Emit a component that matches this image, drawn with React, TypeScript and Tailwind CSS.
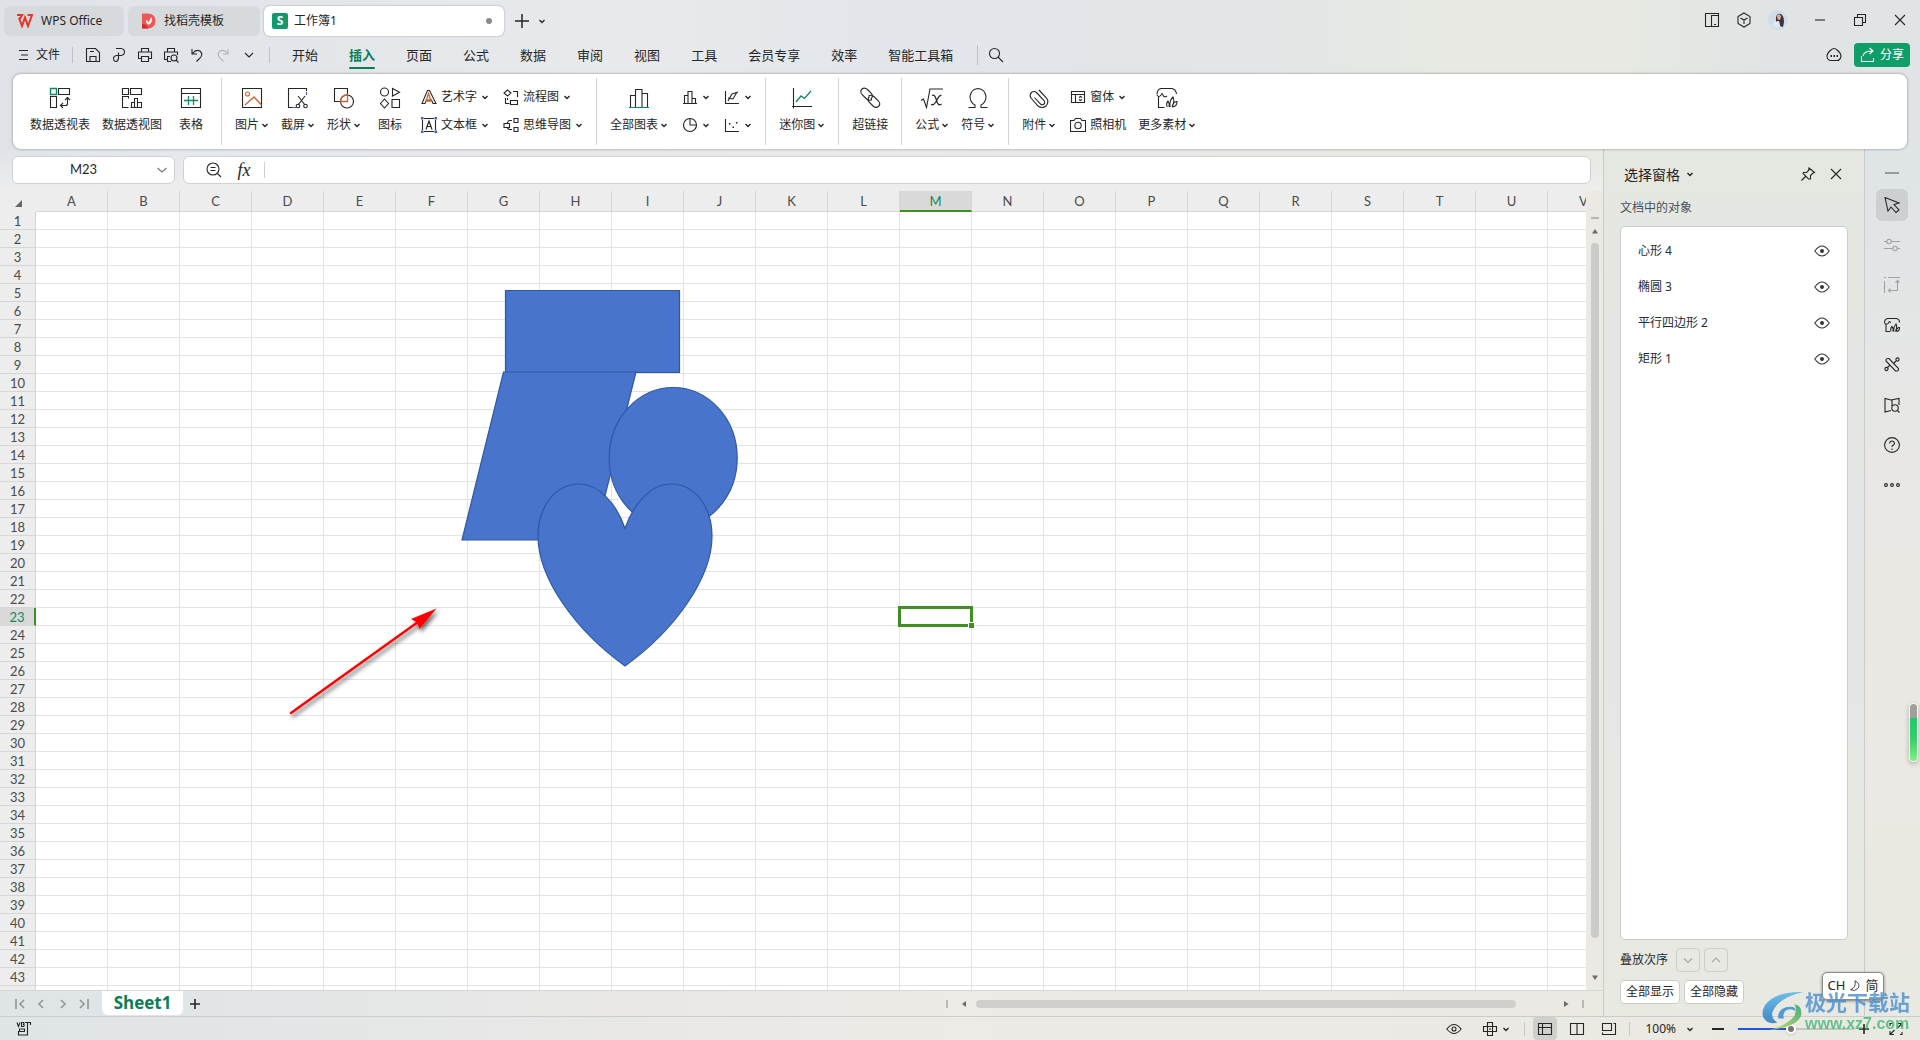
import type { ReactNode } from 'react'
import clsx from 'clsx'

const COLUMNS = 'ABCDEFGHIJKLMNOPQRSTUV'.split('')
const ROW_COUNT = 44
const ROWS = Array.from({ length: ROW_COUNT }, (_, i) => i + 1)
const ACTIVE_COL = 'M'
const ACTIVE_ROW = 23

const MENU_TABS = ['开始', '插入', '页面', '公式', '数据', '审阅', '视图', '工具', '会员专享', '效率', '智能工具箱']
const OBJECTS = ['心形 4', '椭圆 3', '平行四边形 2', '矩形 1']

const GREEN = '#0f8a60'
const ORANGE = '#d0622b'
const BLUE = '#2f5fd8'

interface IconProps {
  size?: number
  box?: number
  className?: string
  children: ReactNode
}

function Icon({ size = 16, box, className, children }: IconProps) {
  const b = box ?? size
  return (
    <svg
      width={size}
      height={size}
      viewBox={`0 0 ${b} ${b}`}
      fill="none"
      stroke="currentColor"
      strokeWidth="1.1"
      className={clsx('flex-none', className)}
      aria-hidden="true"
    >
      {children}
    </svg>
  )
}

function Caret({ className }: { className?: string }) {
  return (
    <Icon size={8} className={className}>
      <path d="M1.5 3 4 5.5 6.5 3" strokeWidth="1.4" />
    </Icon>
  )
}

function Chevron({ d = 'M4 6.5 8 10.5 12 6.5' }: { d?: string }) {
  return (
    <Icon>
      <path d={d} strokeWidth="1.2" />
    </Icon>
  )
}

/* ---------- ribbon icons, 22px ---------- */

const big = {
  pivotTable: (
    <Icon size={22}>
      <path d="M1.5 1.5h6v6h-6z" stroke={GREEN} strokeWidth="1.4" />
      <path d="M9.5 1.5h11v6h-11zM1.5 9.5h6v11h-6z" />
      <path d="M18.5 11v5.5q0 2-2 2H12M16 13l2.5-2.500L21 13M14 16l-2.500 2.500L14 21" />
    </Icon>
  ),
  pivotChart: (
    <Icon size={22}>
      <path d="M1.5 1.5h6v6h-6zM9.5 1.5h11v6h-11zM7.5 20.5h-6v-11h6v2" />
      <path d="M10.5 20.5v-5h3v5M13.5 20.5v-9h3v9M16.5 15.5h4v5h-11" />
    </Icon>
  ),
  table: (
    <Icon size={22}>
      <path d="M1.5 1.5h19v19h-19zM1.5 6.5h19" />
      <path d="M4 13.5h14M8.5 9v9M13.5 9v9" stroke={GREEN} strokeWidth="1.3" />
    </Icon>
  ),
  picture: (
    <Icon size={22}>
      <path d="M1.5 1.5h19v19h-19z" />
      <circle cx="6.5" cy="7" r="2" stroke={ORANGE} />
      <path d="m4 18 9-8 7.500 8" stroke={ORANGE} strokeWidth="1.3" />
    </Icon>
  ),
  screenshot: (
    <Icon size={22}>
      <path d="M5 20.5H1.5v-19h18V4" />
      <path d="M5 20.500h4M19.500 5v3" stroke={BLUE} />
      <path d="m11 9 7 9M18 9l-7 9" />
      <circle cx="11" cy="19" r="1.8" />
      <circle cx="18.5" cy="19" r="1.8" />
    </Icon>
  ),
  shapes: (
    <Icon size={22}>
      <path d="M7 14.5H1.5v-13h13V7" />
      <circle cx="14" cy="14.5" r="6.5" />
      <path d="M7.5 14.5q0-6 7-7v7z" stroke={ORANGE} strokeWidth="1.3" />
    </Icon>
  ),
  icons: (
    <Icon size={22}>
      <circle cx="5.5" cy="5" r="4" />
      <path d="M13.5 1.5V9l7-3.750zM5.500 12l4 4.500-4 4.500-4-4.500zM13 12.500h7.500v8H13z" />
    </Icon>
  ),
  charts: (
    <Icon size={22}>
      <path d="M2.5 20V8.5h5V20M7.500 20V2.500H14V20M14 6.500h5.500V20" />
      <path d="M1 20.5h20" stroke={GREEN} />
    </Icon>
  ),
  sparkline: (
    <Icon size={22}>
      <path d="M2.5 1v20.500M1 19.500h20" />
      <path d="m5 15 5-6 3.500 2.500L20 4" stroke={GREEN} strokeWidth="1.3" />
    </Icon>
  ),
  link: (
    <Icon size={22}>
      <path d="M13 12.500q-3 2-6-1L3 7.500q-2.500-3 0-5.500 2.500-2 5.500.500l4 4q2 3-.500 5.500" />
      <path d="M9.500 9q3-2 6 1l4 4q2.500 3 0 5.500-2.500 2-5.500-.500l-4-4q-2-3 .500-5.500" />
    </Icon>
  ),
  formula: (
    <Icon size={22}>
      <path d="M0 13.500 2.500 12l3 8.500L9 2h13" />
      <path
        d="M11 8.500q2-1.500 3.500 2l2 5.500q1.500 3 4 1M20.500 8.500q-2-.500-4 3.500l-2 3.500q-2 3-4.500 2"
        strokeWidth="1.3"
      />
    </Icon>
  ),
  omega: (
    <Icon size={22}>
      <path d="M1.500 20.500H8V18q-5-2.500-5-8.500 1-7.500 8-8 7 .500 8 8 0 6-5 8.500v2.500h6.500" />
    </Icon>
  ),
  clip: (
    <Icon size={22}>
      <path d="m6.500 10.500 6 6.500q2 1.500 3.500 0t0-3.500L8.500 5.500Q6 3.500 3.500 5.500 1 8 3 11l7 8q4 3 8 0 3.500-4 .500-8L11 3" />
    </Icon>
  ),
  material: (
    <Icon size={22}>
      <path d="M2.500 9v11.500h6M1 7.500q0-5 4-6h11q4 1 4.500 5.500M1 8q2 3 4 0 1-3 2 0t4 1" />
      <path d="M11 20q-1-4 1-6 2 3 1 6M14 20q-1-6 3-10 2 5-1 10M16.500 20q0-5 4.500-5.500 0 5-4.500 5.500" />
    </Icon>
  ),
}

/* ---------- ribbon icons, 16px ---------- */

const small = {
  wordArt: (
    <Icon>
      <path d="M1 14.500 6.500 1.500h2L15 14.500h-3L10.500 11h-5L4 14.500z" />
      <path d="M7.500 4.500 10 12H5z" stroke={ORANGE} strokeWidth="1.3" />
    </Icon>
  ),
  textBox: (
    <Icon>
      <path d="M3 1.500h10M3 14.500h10M1.500 3v10M14.500 3v10" />
      <path d="M5 12.500 8 4l3 8.500M6 9.500h4" strokeWidth="1.2" />
      <path
        d="M0 0h2.500v2.500H0zM13.500 0H16v2.500h-2.500zM0 13.500h2.500V16H0zM13.500 13.500H16V16h-2.500z"
        fill={BLUE}
        stroke="none"
      />
    </Icon>
  ),
  flow: (
    <Icon>
      <path d="m4.500 1 3.500 3-3.500 3L1 4zM10 2.500h4.500V8M2.500 9v5.500h4M7.500 11.500h7v4h-7zM4.500 9v2" />
    </Icon>
  ),
  mind: (
    <Icon>
      <path d="M1 6.500h5.500v4H1zM11 1.500h4v4h-4zM11 10.500h4v4h-4zM9 3.500H6L4 6M9 12.500H6l-2-2" />
    </Icon>
  ),
  bars: (
    <Icon>
      <path d="M1 14.500h14M2.500 14V6.500H6V14M6 14V2.500h4V14M10 9.500h3.500V14" />
    </Icon>
  ),
  lines: (
    <Icon>
      <path d="M1.500 2v12.500H15M4 12l4-7 6-2M4 9l5 1 4-7" />
    </Icon>
  ),
  pie: (
    <Icon>
      <circle cx="8" cy="8" r="6.500" />
      <path d="M8 1.500V8h6.500" />
    </Icon>
  ),
  scatter: (
    <Icon>
      <path d="M1.500 2v12.500H15" />
      <path d="M5 6h1.500v1.500H5zM8.500 9.500H10V11H8.500zM12 5h1.500v1.500H12z" fill="currentColor" stroke="none" />
    </Icon>
  ),
  form: (
    <Icon>
      <path d="M1.500 2.500h13v11h-13zM1.500 5.500h13M5.500 5.500v8" />
      <path d="m9 8.500 1.500-1 1.500 1M9 10.500l1.500 1 1.500-1" />
    </Icon>
  ),
  camera: (
    <Icon>
      <path d="M.500 3.500H4l1.500-2h5l1.500 2h3.500v11H.500z" />
      <circle cx="8" cy="8.500" r="3.200" />
    </Icon>
  ),
}

function BigButton({ icon, label, caret }: { icon: ReactNode; label: string; caret?: boolean }) {
  return (
    <button type="button" className="flex min-w-[34px] flex-col items-center gap-2">
      {icon}
      <span className="flex items-center gap-0.5 leading-4">
        {label}
        {caret && <Caret />}
      </span>
    </button>
  )
}

interface SmallButtonProps {
  icon: ReactNode
  label?: string
  name?: string
  caret?: boolean
}

function SmallButton({ icon, label, name, caret }: SmallButtonProps) {
  return (
    <button type="button" aria-label={name} className="flex h-5 items-center gap-1">
      {icon}
      {label}
      {caret && <Caret />}
    </button>
  )
}

function Stack({ children }: { children: ReactNode }) {
  return <div className="ml-0.5 flex flex-col items-start gap-2">{children}</div>
}

function Group({ children, first, last }: { children: ReactNode; first?: boolean; last?: boolean }) {
  return (
    <div
      className={clsx(
        'my-1 flex items-start gap-3 pt-[9px] pr-[13px]',
        first ? 'pl-[17px]' : 'pl-[13px]',
        !last && 'border-r border-[#d4d4d4]',
      )}
    >
      {children}
    </div>
  )
}

function TitleBar() {
  return (
    <header className="flex h-9 items-end gap-1 pl-1 text-[12px]">
      <button type="button" className="flex h-[30px] w-[120px] items-center gap-2 rounded-md bg-[#d7dadd] pl-3">
        <svg width="17" height="14" viewBox="0 0 17 14" fill="none" aria-hidden="true">
          <path d="M1 1h5l-1.500 3H3M3 4l3 8 3-8.500L12 12l4-11h-4.500" stroke="#ee3524" strokeWidth="2" />
        </svg>
        WPS Office
      </button>
      <button type="button" className="flex h-[30px] w-[132px] items-center gap-2 rounded-md bg-[#d7dadd] pl-3.5">
        <svg width="14" height="16" viewBox="0 0 15 16" aria-hidden="true">
          <path d="M0 0h7q7.500 1 7.500 8T7 16H0z" fill="#ef5656" />
          <path d="M0 11q4 0 7 5H0z" fill="#c93030" />
          <path d="M7.500 12q-4-1-3-5 3 1 3 4 0-5 3-7 1.500 5-3 8" fill="#fff" />
        </svg>
        找稻壳模板
      </button>
      <div className="flex h-[30px] w-[240px] items-center gap-1.5 rounded-md bg-white pr-3 pl-2 shadow-[0_0_2px_rgba(0,0,0,.35)]">
        <span className="flex h-4 w-4 items-center justify-center rounded-[2px] bg-[#12996a] text-[12px] font-bold text-white">
          S
        </span>
        <span className="flex-1">工作簿1</span>
        <span className="h-1.5 w-1.5 rounded-full bg-[#8b8b8b]" />
      </div>
      <div className="flex h-[30px] items-center pl-1.5">
        <button type="button" aria-label="新建标签">
          <Icon>
            <path d="M8 1v14M1 8h14" strokeWidth="1.500" />
          </Icon>
        </button>
        <button type="button" aria-label="标签列表" className="px-2">
          <Caret />
        </button>
      </div>
      <div className="ml-auto flex h-8 items-center">
        <button type="button" aria-label="侧栏" className="flex w-8 justify-center">
          <Icon>
            <path d="M1.500 1.500h13v13h-13zM7.500 14.500v-11h7M10 12.500h2" />
          </Icon>
        </button>
        <button type="button" aria-label="应用" className="flex w-8 justify-center">
          <Icon>
            <path d="m8 1 6 3.500v7L8 15l-6-3.500v-7zM4.500 6 8 8l3.500-2M8 8v4" />
          </Icon>
        </button>
        <button type="button" aria-label="账号" className="flex w-9 justify-center">
          <svg width="20" height="20" viewBox="0 0 20 20" aria-hidden="true">
            <circle cx="10" cy="10" r="10" fill="#cfdde8" />
            <path d="M8 7q1-4 5-3 3 2 3 8l-1 5-3-1-1-5-3 1z" fill="#3a3338" />
            <path d="M9 5q3-2 4 1 0 4-2 4-3-1-2-5" fill="#dba49b" />
            <path d="m6 12 5-1 1 6q-5 1-8-2z" fill="#dce9f5" />
          </svg>
        </button>
        <button type="button" aria-label="最小化" className="ml-1 flex w-10 justify-center">
          <Icon>
            <path d="M3 8h10" />
          </Icon>
        </button>
        <button type="button" aria-label="还原" className="flex w-10 justify-center">
          <Icon>
            <path d="M2.500 5.500h8v8h-8zM5.500 5V2.500h8v8h-3" />
          </Icon>
        </button>
        <button type="button" aria-label="关闭" className="flex w-10 justify-center">
          <Icon>
            <path d="m3 3 10 10M13 3 3 13" />
          </Icon>
        </button>
      </div>
    </header>
  )
}

const QUICK: { name: string; icon: ReactNode; dim?: boolean }[] = [
  { name: '保存', icon: <path d="M1.500 14.500v-13h9l4 4v9zM5 14v-4.500h6V14M5 4.500h4" /> },
  { name: '输出为PDF', icon: <path d="M5 1.500h5q3.500.500 3.500 3.500T10 8.500H5.500q-3 .500-3 3t2 3 3-3v-6" /> },
  { name: '打印', icon: <path d="M4.500 5V1.500h7V5M4 11.500H1.500V5h13v6.500H12M4.500 9.500h7v5h-7z" /> },
  {
    name: '打印预览',
    icon: (
      <>
        <path d="M4.500 5V1.500h7V5M4 12.500H1.500V5h13v3M8 14.500H4.500v-5H7" />
        <circle cx="11" cy="11" r="3" />
        <path d="m13 13 2.500 2.500" />
      </>
    ),
  },
  { name: '撤销', icon: <path d="M3 2v5h5M3.500 6.500Q7 2 11 4q4 4-1 8l-2.500 2.500" /> },
  { name: '恢复', dim: true, icon: <path d="M13 2v5H8M12.500 6.500Q9 2 5 4q-4 4 1 8l2.500 2.500" /> },
  { name: '更多', icon: <path d="m4 6 4 4 4-4" /> },
]

function MenuBar() {
  return (
    <nav className="flex h-[38px] items-center">
      <button type="button" className="ml-4 flex items-center gap-1 text-[12px]">
        <Icon>
          <path d="M3 3.500h9M5 8h7M3 12.500h9" />
        </Icon>
        文件
      </button>
      <span className="mr-[7px] ml-3 h-4 w-px bg-[#bfc2c5]" />
      {QUICK.map((q) => (
        <button
          key={q.name}
          type="button"
          aria-label={q.name}
          className={clsx('flex w-[26px] justify-center', q.dim && 'text-[#b3b5b8]')}
        >
          <Icon>{q.icon}</Icon>
        </button>
      ))}
      <span className="mr-1.5 ml-[7px] h-4 w-px bg-[#bfc2c5]" />
      <div className="flex gap-[31px] px-4">
        {MENU_TABS.map((t) => (
          <button
            key={t}
            type="button"
            className={clsx(
              'flex h-[38px] flex-col items-center text-[13px]',
              t === '插入' && 'font-bold text-[#0a7d55]',
            )}
          >
            <span className="mt-2 leading-[22px]">{t}</span>
            {t === '插入' && <span className="mt-px h-0.5 w-[26px] rounded-full bg-[#0a7d55]" />}
          </button>
        ))}
      </div>
      <span className="mx-2 h-5 w-px bg-[#bfc2c5]" />
      <button type="button" aria-label="搜索" className="ml-0.5">
        <Icon>
          <circle cx="6.500" cy="6.500" r="5" />
          <path d="m10 10 5 5" />
        </Icon>
      </button>
      <button type="button" aria-label="云同步" className="ml-auto">
        <Icon>
          <path d="M5 3q3-3 6 0 4 3 4 6.500-1 4-4 4H5q-3.500 0-4-4Q1 6 5 3z" />
          <path d="M4.500 9H6M7.500 9H9M10.500 9H12" strokeWidth="1.800" />
        </Icon>
      </button>
      <button
        type="button"
        className="mr-2.5 ml-3 flex h-6 w-14 items-center justify-center gap-1 rounded-[4px] bg-[#0f9d68] text-[12px] text-white"
      >
        <Icon>
          <path d="M1.500 9v5.500h12V11M3 9q1-5 9-5M9.500 1l3.500 3-3.500 3" />
        </Icon>
        分享
      </button>
    </nav>
  )
}

function Ribbon() {
  return (
    <section
      aria-label="插入"
      className="z-10 mx-[13px] flex h-[75px] rounded-lg bg-white text-[12px] shadow-[0_0_3px_rgba(0,0,0,.4)]"
    >
      <Group first>
        <BigButton icon={big.pivotTable} label="数据透视表" />
        <BigButton icon={big.pivotChart} label="数据透视图" />
        <BigButton icon={big.table} label="表格" />
      </Group>
      <Group>
        <BigButton icon={big.picture} label="图片" caret />
        <BigButton icon={big.screenshot} label="截屏" caret />
        <BigButton icon={big.shapes} label="形状" caret />
        <BigButton icon={big.icons} label="图标" />
        <Stack>
          <SmallButton icon={small.wordArt} label="艺术字" caret />
          <SmallButton icon={small.textBox} label="文本框" caret />
        </Stack>
        <Stack>
          <SmallButton icon={small.flow} label="流程图" caret />
          <SmallButton icon={small.mind} label="思维导图" caret />
        </Stack>
      </Group>
      <Group>
        <BigButton icon={big.charts} label="全部图表" caret />
        <Stack>
          <SmallButton icon={small.bars} name="柱形图" caret />
          <SmallButton icon={small.pie} name="饼图" caret />
        </Stack>
        <Stack>
          <SmallButton icon={small.lines} name="折线图" caret />
          <SmallButton icon={small.scatter} name="散点图" caret />
        </Stack>
      </Group>
      <Group>
        <BigButton icon={big.sparkline} label="迷你图" caret />
      </Group>
      <Group>
        <BigButton icon={big.link} label="超链接" />
      </Group>
      <Group>
        <BigButton icon={big.formula} label="公式" caret />
        <BigButton icon={big.omega} label="符号" caret />
      </Group>
      <Group last>
        <BigButton icon={big.clip} label="附件" caret />
        <Stack>
          <SmallButton icon={small.form} label="窗体" caret />
          <SmallButton icon={small.camera} label="照相机" />
        </Stack>
        <BigButton icon={big.material} label="更多素材" caret />
      </Group>
    </section>
  )
}

function FormulaBar() {
  return (
    <div className="flex gap-2 bg-linear-to-b from-[#ededed]/0 to-[#ededed] px-3 py-[7px]">
      <div className="flex h-7 w-[163px] items-center rounded-md border border-[#cfd1d3] bg-white pr-1">
        <input
          aria-label="名称框"
          defaultValue="M23"
          className="w-full min-w-0 flex-1 text-center font-['Lato','Noto_Sans',sans-serif] text-[13px] outline-none"
        />
        <button type="button" aria-label="展开名称框" className="text-[#777]">
          <Chevron d="M3.500 6 8 10l4.500-4" />
        </button>
      </div>
      <div className="flex h-7 flex-1 items-center rounded-md border border-[#cfd1d3] bg-white">
        <button type="button" aria-label="浏览公式" className="ml-[22px]">
          <Icon>
            <circle cx="7" cy="7" r="6" />
            <path d="M4.500 5.500h5M4.500 8.500h5M11.500 11.500 15 15" />
          </Icon>
        </button>
        <button
          type="button"
          aria-label="插入函数"
          className="ml-3.5 w-4 font-['Liberation_Serif',serif] text-[18px] leading-5 italic"
        >
          fx
        </button>
        <span className="ml-3 h-4 w-px bg-[#cfcfcf]" />
        <input aria-label="编辑栏" className="flex-1 px-2 text-[13px] outline-none" />
      </div>
    </div>
  )
}

function Drawings() {
  return (
    <svg
      width="720"
      height="540"
      viewBox="0 0 720 540"
      fill="none"
      className="pointer-events-none absolute top-[21px] left-9"
      aria-hidden="true"
    >
      <defs>
        <filter id="drop" x="-10%" y="-10%" width="130%" height="130%">
          <feDropShadow dx="2" dy="3" stdDeviation="2" floodOpacity="0.6" />
        </filter>
      </defs>
      <g fill="#4874cb" stroke="#2f57a4" strokeWidth="1.200">
        <path d="M469.500 78.500h174v82h-174z" />
        <path d="M467.500 160h132.500L558 328H426z" />
        <ellipse cx="637.200" cy="246" rx="64" ry="70.500" />
        <path d="M589 316.500C580 290 562 272 543 272c-23 0-41 22-41 52 0 42 37 94 87 130 50-36 87-88 87-130 0-30-18-52-41-52-19 0-37 18-46 44.500z" />
      </g>
      <g filter="url(#drop)">
        <path d="M255 501 382 410" stroke="#f00" strokeWidth="2.500" strokeLinecap="round" />
        <path d="M400.500 396.500 375 407l6 3.500 2.500 6.500z" fill="#f00" />
      </g>
    </svg>
  )
}

function Sheet() {
  return (
    <div className="flex min-h-0 flex-1">
      <div className="relative min-w-0 flex-1 overflow-hidden bg-white">
        <table className="w-[1620px] table-fixed border-separate border-spacing-0 font-['Lato','Noto_Sans',sans-serif] text-[13px] text-[#4b4b4b]">
          <thead>
            <tr className="h-[21px]">
              <th className="w-9 bg-[#ededed] p-0">
                <svg width="7" height="7" viewBox="0 0 7 7" className="mt-1 ml-[15px]" role="img" aria-label="全选">
                  <path d="M7 0v7H0z" fill="#666" />
                </svg>
              </th>
              {COLUMNS.map((c) => (
                <th
                  key={c}
                  scope="col"
                  className={clsx(
                    'w-[72px] border-r border-r-[#d6d6d6] p-0 leading-4 font-normal',
                    c === ACTIVE_COL
                      ? 'border-b-2 border-b-[#3f8f23] bg-[#d9d9d9] text-[#0f8a60]'
                      : 'border-b border-b-[#d6d6d6] bg-[#ededed]',
                  )}
                >
                  {c}
                </th>
              ))}
            </tr>
          </thead>
          <tbody>
            {ROWS.map((r) => (
              <tr key={r} className="h-[18px]">
                <th
                  scope="row"
                  className={clsx(
                    'border-b border-b-[#d6d6d6] p-0 leading-4 font-normal',
                    r === ACTIVE_ROW
                      ? 'border-r-2 border-r-[#3f8f23] bg-[#d9d9d9] text-[#0f8a60]'
                      : 'border-r border-r-[#d6d6d6] bg-[#ededed]',
                  )}
                >
                  {r < ROW_COUNT && r}
                </th>
                {COLUMNS.map((c) => (
                  <td
                    key={c}
                    className={clsx(
                      'border-r border-b border-[#e3e3e3] p-0',
                      r === ACTIVE_ROW && c === ACTIVE_COL && 'relative',
                    )}
                  >
                    {r === ACTIVE_ROW && c === ACTIVE_COL && (
                      <span className="absolute -inset-0.5 z-10 border-[3px] border-[#3f8f23]">
                        <span className="absolute -right-1 -bottom-1 h-1.5 w-1.5 border-t border-l border-white bg-[#3f8f23]" />
                      </span>
                    )}
                  </td>
                ))}
              </tr>
            ))}
          </tbody>
        </table>
        <Drawings />
      </div>
      {/* vertical scrollbar */}
      <div className="flex w-[17px] flex-col items-center pt-6 pb-2 text-[#6b6b6b]">
        <span className="mt-0.5 h-0.5 w-2 bg-[#b5b5b5]" />
        <Icon size={8} className="mt-2">
          <path d="M1 6.500 4 2l3 4.500z" fill="currentColor" stroke="none" />
        </Icon>
        <div className="mt-2 w-2 flex-1 rounded-full bg-[#cbccca]" />
        <Icon size={8} className="mt-9">
          <path d="M1 1.500 4 6l3-4.500z" fill="currentColor" stroke="none" />
        </Icon>
      </div>
    </div>
  )
}

function SheetTabs() {
  const nav = [
    { name: '第一张', d: 'M4 3v10M12 4 8 8l4 4' },
    { name: '上一张', d: 'M10 4 6 8l4 4' },
    { name: '下一张', d: 'm6 4 4 4-4 4' },
    { name: '最后一张', d: 'M12 3v10M4 4l4 4-4 4' },
  ]
  return (
    <div className="flex h-[26px] items-center border-t border-[#d3d5d6]">
      <div className="flex w-[102px] justify-between pr-2.5 pl-3 text-[#929598]">
        {nav.map((n) => (
          <button key={n.name} type="button" aria-label={n.name}>
            <Icon>
              <path d={n.d} strokeWidth="1.600" />
            </Icon>
          </button>
        ))}
      </div>
      <button
        type="button"
        className="-mt-0.5 h-6 w-[81px] rounded-b-md bg-white font-['Open_Sans','Noto_Sans',sans-serif] text-[17px] leading-6 font-bold text-[#0a7d55]"
      >
        Sheet1
      </button>
      <button type="button" aria-label="新建工作表" className="ml-1">
        <Icon>
          <path d="M8 3v10M3 8h10" strokeWidth="1.600" />
        </Icon>
      </button>
      {/* horizontal scrollbar, right 40% of the row */}
      <div className="ml-auto flex w-[41%] items-center text-[#6b6b6b]">
        <span className="h-2 w-0.5 bg-[#b9b9b9]" />
        <Icon size={8} className="ml-3">
          <path d="M6 1 2 4l4 3z" fill="currentColor" stroke="none" />
        </Icon>
        <div className="ml-2 h-2 flex-1 rounded-full bg-[#d0cfcb]" />
        <Icon size={8} className="ml-[46px]">
          <path d="m2 1 4.500 3L2 7z" fill="currentColor" stroke="none" />
        </Icon>
        <span className="mr-[19px] ml-3 h-2 w-0.5 bg-[#b9b9b9]" />
      </div>
    </div>
  )
}

function EyeIcon() {
  return (
    <Icon>
      <path d="M.800 8Q8-2 15.200 8 8 18 .800 8z" />
      <circle cx="8" cy="8" r="2" fill="currentColor" stroke="none" />
    </Icon>
  )
}

function SelectionPane() {
  return (
    <aside className="flex w-[261px] flex-none flex-col border-l border-[#c9cccc] bg-linear-to-b from-[#e5e7e1] via-[#e3e6e5] to-[#e8e9e1] pr-4 pb-3 pl-4 text-[12px]">
      <div className="mt-[15px] flex h-5 items-center">
        <button type="button" className="ml-1 flex items-center gap-1.5 text-[14px] text-[#222]">
          选择窗格
          <Caret />
        </button>
        <button type="button" aria-label="固定" className="ml-auto">
          <Icon>
            <path d="m9 2 5.500 4.500-2 1-2 2v3.500L8.500 13 3 7.500l.500-1H6.500l2-2zM5.500 10.500 1.500 14.500" />
          </Icon>
        </button>
        <button type="button" aria-label="关闭窗格" className="mr-1 ml-3">
          <Icon>
            <path d="m3 3 10 10M13 3 3 13" />
          </Icon>
        </button>
      </div>
      <div className="mt-4 leading-4 text-[#47525f]">文档中的对象</div>
      <ul className="mt-2.5 flex-1 rounded-[5px] border border-[#c9cccc] bg-white px-[17px] pt-1.5">
        {OBJECTS.map((o) => (
          <li key={o} className="flex h-9 items-center justify-between text-[#222b3a]">
            {o}
            <button type="button" aria-label={`隐藏 ${o}`} className="text-[#333]">
              <EyeIcon />
            </button>
          </li>
        ))}
      </ul>
      <div className="mt-2 flex h-6 items-center gap-1 text-[#222b3a]">
        <span className="mr-1">叠放次序</span>
        <button
          type="button"
          aria-label="下移一层"
          className="flex h-6 w-6 items-center justify-center rounded-[4px] border border-[#cccec9] text-[#aaa]"
        >
          <Chevron />
        </button>
        <button
          type="button"
          aria-label="上移一层"
          className="flex h-6 w-6 items-center justify-center rounded-[4px] border border-[#cccec9] text-[#aaa]"
        >
          <Chevron d="m4 10 4-4 4 4" />
        </button>
      </div>
      <div className="mt-2 flex gap-1">
        <button type="button" className="h-6 w-[60px] rounded-[4px] border border-[#cccec9] bg-white">
          全部显示
        </button>
        <button type="button" className="h-6 w-[60px] rounded-[4px] border border-[#cccec9] bg-white">
          全部隐藏
        </button>
      </div>
    </aside>
  )
}

const RAIL: { name: string; icon: ReactNode; dim?: boolean; on?: boolean }[] = [
  {
    name: '选择',
    on: true,
    icon: <path d="m1 .500 3 13.500 3-4 5 5.500 3-2.500-5-5.500 5-1.500z" />,
  },
  {
    name: '属性',
    dim: true,
    icon: (
      <>
        <path d="M0 4.500h3M7 4.500h9M0 11.500h9M13 11.500h3" />
        <circle cx="5" cy="4.500" r="2.200" />
        <circle cx="11" cy="11.500" r="2.200" />
      </>
    ),
  },
  {
    name: '分析',
    dim: true,
    icon: <path d="M.500 4v12M4 .500h12M0 .500h2M13.500 3.500v10H5M11.500 5.500l2-2 2 2M6.500 11.500l-2 2 2 2" />,
  },
  {
    name: '素材',
    icon: (
      <path d="M2 6.500v8h4M.500 6q0-4 3-4.500h9q3 .500 3 4M.500 6q2 2.500 4 0 1-3 2 0M7 14.500q-1-3 1-5 1.500 2 1 5M10 14.500q-1-4 2-7.500 1.500 3-.500 7.500M12.500 14.500q0-4 3-4 0 4-3 4" />
    ),
  },
  {
    name: '工具',
    icon: (
      <>
        <path d="M2 4q-.500-3 3-2.500l9.500 10q.500 3-3 2.500zM3 11l3-3M10 6l2-2" />
        <circle cx="2.500" cy="12" r="1.600" />
        <circle cx="13.500" cy="2.500" r="1.600" />
      </>
    ),
  },
  {
    name: '查找',
    icon: (
      <>
        <path d="M7 13.500 1 15V1.500L7 3l8-1.500V8M8 3v6" />
        <circle cx="11" cy="11" r="3.200" />
        <path d="m13.500 13.500 2 2" />
      </>
    ),
  },
  {
    name: '帮助',
    icon: (
      <>
        <circle cx="8" cy="8" r="7.400" />
        <path d="M5.500 6.500Q6 4 8 4t2.500 2.500Q10 8 8 9v1M8 11.500V13" />
      </>
    ),
  },
  {
    name: '更多',
    icon: (
      <>
        <circle cx="2" cy="8" r="1.400" />
        <circle cx="8" cy="8" r="1.400" />
        <circle cx="14" cy="8" r="1.400" />
      </>
    ),
  },
]

function SideRail() {
  return (
    <aside className="relative flex w-14 flex-none flex-col items-center gap-2 border-l border-[#c9cccc] bg-linear-to-b from-[#dfe4e6] via-[#ebe8e4] to-[#e8e9e1] pr-0.5">
      <button type="button" aria-label="收起" className="mt-4 h-4 w-4 text-[#888]">
        <Icon>
          <path d="M1 8h14" strokeWidth="1.600" />
        </Icon>
      </button>
      {RAIL.map((r) => (
        <button
          key={r.name}
          type="button"
          aria-label={r.name}
          className={clsx(
            'flex h-8 w-8 flex-none items-center justify-center rounded-md',
            r.on && 'bg-[#cdd0d0]',
            r.dim && 'text-[#a0a3a4]',
          )}
        >
          <Icon>{r.icon}</Icon>
        </button>
      ))}
      {/* floating gauge docked to the screen edge */}
      <div className="absolute top-[554px] right-0.5 flex h-[59px] w-[9px] flex-col overflow-hidden rounded-full border border-white/70 shadow-[0_2px_5px_rgba(0,0,0,.25)]">
        <span className="h-[14px] bg-[#a09f9a]" />
        <span className="flex-1 bg-linear-to-b from-[#1fc96a] via-[#35cf6d] to-[#7ff07f]" />
      </div>
    </aside>
  )
}

function StatusBar() {
  return (
    <footer className="flex h-6 items-center border-t border-[#cbcdcc] text-[12px]">
      <button type="button" aria-label="VB 宏" className="ml-4">
        <Icon>
          <path d="m1 1.500 1.500 4 1.500-4M5.500 5.500v-4h2q1 1 0 2 1.500 1 0 2zM9 1.500h5.500V4M11.500 2v12h-9v-3.500h6V8h-5v2" />
        </Icon>
      </button>
      <button type="button" aria-label="护眼模式" className="mr-5 ml-auto">
        <Icon>
          <path d="M.800 8Q8-1 15.200 8 8 17 .800 8z" />
          <circle cx="8" cy="8" r="2" />
        </Icon>
      </button>
      <button type="button" aria-label="阅读模式" className="mr-3.5 flex items-center gap-1">
        <Icon>
          <path d="M5.500 1.500h5v4h-5zM5.500 10.500h5v4h-5zM1.500 5.500h4v5h-4zM10.500 5.500h4v5h-4zM7 8h2" />
        </Icon>
        <Caret />
      </button>
      <span className="mr-2 h-3.5 w-px bg-[#c9c9c6]" />
      <div className="flex gap-2">
        <button
          type="button"
          aria-label="普通视图"
          className="flex h-[23px] w-6 items-center justify-center rounded-[4px] bg-[#cfcfcb]"
        >
          <Icon>
            <path d="M1.500 2.500h13v11h-13zM1.500 6.500h13M5.500 2.500v11" />
          </Icon>
        </button>
        <button type="button" aria-label="页面布局" className="flex w-6 items-center justify-center">
          <Icon>
            <path d="M1.500 2.500h13v11h-13zM8 2.500v11" />
          </Icon>
        </button>
        <button type="button" aria-label="分页预览" className="flex w-6 items-center justify-center">
          <Icon>
            <path d="M1.500 2.500h9v7h-9zM12.500 2.500h2v11h-13v-2" />
          </Icon>
        </button>
      </div>
      <span className="mx-2 h-3.5 w-px bg-[#c9c9c6]" />
      <button type="button" className="ml-[7px] flex items-center gap-2.5 font-['Noto_Sans',sans-serif]">
        100%
        <Caret />
      </button>
      <button type="button" aria-label="缩小" className="ml-4">
        <Icon>
          <path d="M2 8h12" strokeWidth="2" />
        </Icon>
      </button>
      <input
        type="range"
        aria-label="缩放"
        defaultValue={45}
        className="ml-3 h-0.5 w-[116px] appearance-none bg-linear-to-r from-[#2453e0] from-45% to-[#c4c5c1] to-45% [&::-webkit-slider-thumb]:h-2.5 [&::-webkit-slider-thumb]:w-2.5 [&::-webkit-slider-thumb]:appearance-none [&::-webkit-slider-thumb]:rounded-full [&::-webkit-slider-thumb]:border-2 [&::-webkit-slider-thumb]:border-white [&::-webkit-slider-thumb]:bg-[#777] [&::-webkit-slider-thumb]:shadow"
      />
      <button type="button" aria-label="放大" className="ml-0.5">
        <Icon>
          <path d="M8 3v10M3 8h10" strokeWidth="1.600" />
        </Icon>
      </button>
      <button type="button" aria-label="全屏" className="mr-4 ml-4">
        <Icon>
          <path d="M10 2.500h4V6M14 2.500 9.500 7M2 10v3.500h4M2 13.500 6.500 9M2 5V2.500h2M12 13.500h2V11" />
        </Icon>
      </button>
    </footer>
  )
}

function ImeBadge() {
  return (
    <div className="absolute right-9 bottom-10 flex h-7 w-[62px] items-center justify-center gap-1 rounded-[5px] border border-[#8c8c8c] bg-white text-[13px] shadow-[0_1px_3px_rgba(0,0,0,.5)]">
      CH
      <Icon size={12} box={16}>
        <path d="M8 1q8 4 4 10-4 5-10 2 8-3 6-12z" />
      </Icon>
      简
    </div>
  )
}

function SiteMark() {
  return (
    <div className="pointer-events-none absolute right-2.5 bottom-2 flex items-center opacity-80">
      <svg width="44" height="40" viewBox="0 0 44 42" aria-hidden="true">
        <defs>
          <linearGradient id="swirl" x1="0" y1="0" x2="0" y2="1">
            <stop offset="0" stopColor="#4db5ea" />
            <stop offset="1" stopColor="#1d6fc0" />
          </linearGradient>
          <linearGradient id="leaf" x1="1" y1="0" x2="0" y2="1">
            <stop offset="0" stopColor="#1f9e6b" />
            <stop offset="1" stopColor="#c3d94a" />
          </linearGradient>
        </defs>
        <path d="M43 1Q14 0 3 15q-6 11 2 17 5 3 11 1-9-6-3-15Q21 6 43 1z" fill="url(#swirl)" />
        <path d="M17 29q-1-9 8-12 11-2 10 4-4-3-9-1-5 3-3 9z" fill="#2f86cf" />
        <path d="M34 14q9 2 7 12-5 12-33 15 20-6 26-15 3-7 0-12z" fill="url(#leaf)" />
      </svg>
      <div className="flex flex-col gap-0.5">
        <span className="text-[21px] leading-6 font-bold text-[#4a8ed0]">极光下载站</span>
        <span className="font-['Liberation_Sans',sans-serif] text-[16px] leading-4 font-bold text-[#45b878]">
          www.xz7.com
        </span>
      </div>
    </div>
  )
}

export default function App() {
  return (
    <div className="relative flex h-screen flex-col overflow-hidden bg-linear-to-r from-[#dfe4e7] via-[#eeeae6] to-[#e8e9e1] font-['Noto_Sans','Noto_Sans_CJK_SC',sans-serif] text-[#262626]">
      <div className="flex flex-col bg-[linear-gradient(90deg,#dfe3e8_0%,#e8e9eb_33%,#e2e6ea_46%,#e3e5e8_64%,#e7e9e2_76%,#e7e9e2_84%,#e1e4e4_92%,#e1e4e6_100%)]">
        <TitleBar />
        <MenuBar />
        <Ribbon />
      </div>
      <main className="flex min-h-0 flex-1">
        <div className="flex min-w-0 flex-1 flex-col">
          <div className="bg-[linear-gradient(90deg,#dfe3e8_0%,#e4e7ec_12%,#e9e9e9_50%,#e7e9e2_100%)]">
            <FormulaBar />
          </div>
          <Sheet />
          <SheetTabs />
        </div>
        <SelectionPane />
        <SideRail />
      </main>
      <StatusBar />
      <ImeBadge />
      <SiteMark />
    </div>
  )
}
